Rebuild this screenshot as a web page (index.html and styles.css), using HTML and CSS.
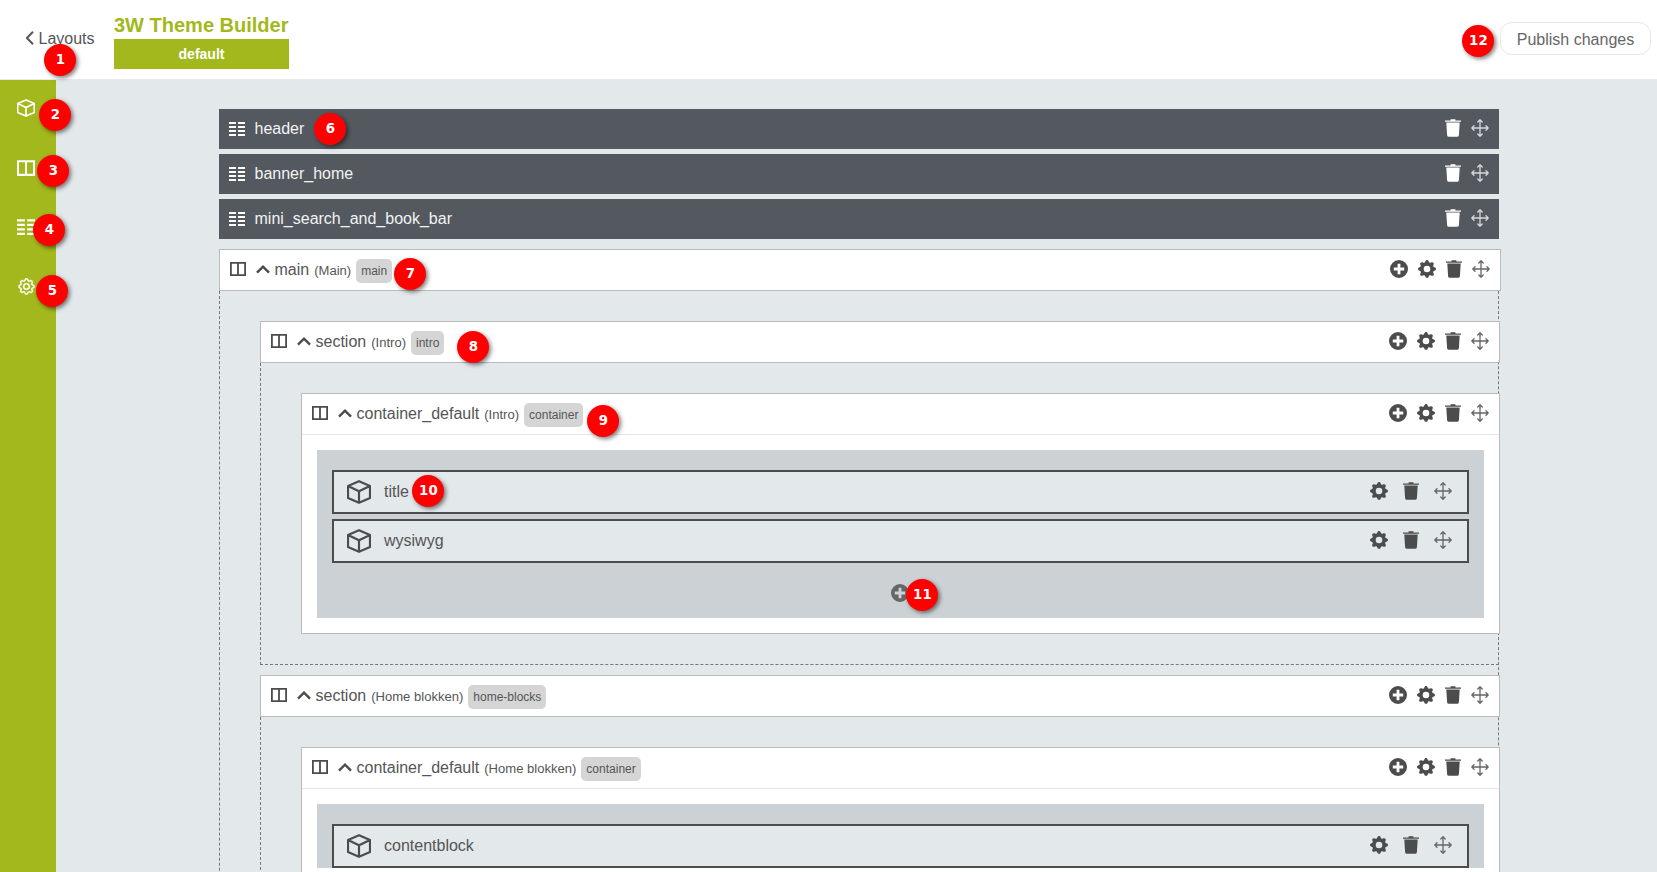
FILE: index.html
```html
<!DOCTYPE html>
<html lang="en">
<head>
<meta charset="utf-8">
<title>3W Theme Builder</title>
<link rel="stylesheet" href="styles.css">
</head>
<body>
<svg class="sprite" xmlns="http://www.w3.org/2000/svg">
  <symbol id="i-box" viewBox="0 0 24 24"><path fill="none" stroke="currentColor" stroke-width="2.2" stroke-linejoin="round" d="M12 1.2 23 5.9v12L12 22.8 1 17.9v-12zM1 5.9l11 5.4 11-5.4M12 11.3v11.5"/></symbol>
  <symbol id="i-split" viewBox="0 0 16 14"><path fill="none" stroke="currentColor" stroke-width="1.8" d="M.9.9h14.2v12.2H.9zM8 .9v12.2"/></symbol>
  <symbol id="i-list" viewBox="0 0 16 14"><path fill="currentColor" d="M0 0h7v2H0zM9 0h7v2H9zM0 4h7v2H0zM9 4h7v2H9zM0 8h7v2H0zM9 8h7v2H9zM0 12h7v2H0zM9 12h7v2H9z"/></symbol>
  <symbol id="i-gear" viewBox="-.3 -.3 16.6 16.6"><path fill="currentColor" stroke="currentColor" stroke-width=".5" d="M8 4.754a3.246 3.246 0 1 0 0 6.492 3.246 3.246 0 0 0 0-6.492zM5.754 8a2.246 2.246 0 1 1 4.492 0 2.246 2.246 0 0 1-4.492 0z"/><path fill="currentColor" stroke="currentColor" stroke-width=".5" d="M9.796 1.343c-.527-1.79-3.065-1.79-3.592 0l-.094.319a.873.873 0 0 1-1.255.52l-.292-.16c-1.64-.892-3.433.902-2.54 2.541l.159.292a.873.873 0 0 1-.52 1.255l-.319.094c-1.79.527-1.79 3.065 0 3.592l.319.094a.873.873 0 0 1 .52 1.255l-.16.292c-.892 1.64.901 3.434 2.541 2.54l.292-.159a.873.873 0 0 1 1.255.52l.094.319c.527 1.79 3.065 1.79 3.592 0l.094-.319a.873.873 0 0 1 1.255-.52l.292.16c1.64.893 3.434-.902 2.54-2.541l-.159-.292a.873.873 0 0 1 .52-1.255l.319-.094c1.79-.527 1.79-3.065 0-3.592l-.319-.094a.873.873 0 0 1-.52-1.255l.16-.292c.893-1.64-.902-3.433-2.541-2.54l-.292.159a.873.873 0 0 1-1.255-.52l-.094-.319zm-2.633.283c.246-.835 1.428-.835 1.674 0l.094.319a1.873 1.873 0 0 0 2.693 1.115l.291-.16c.764-.415 1.6.42 1.184 1.185l-.159.292a1.873 1.873 0 0 0 1.116 2.692l.318.094c.835.246.835 1.428 0 1.674l-.319.094a1.873 1.873 0 0 0-1.115 2.693l.16.291c.415.764-.42 1.6-1.185 1.184l-.291-.159a1.873 1.873 0 0 0-2.693 1.116l-.094.318c-.246.835-1.428.835-1.674 0l-.094-.319a1.873 1.873 0 0 0-2.692-1.115l-.292.16c-.764.415-1.6-.42-1.184-1.185l.159-.291A1.873 1.873 0 0 0 1.945 8.93l-.319-.094c-.835-.246-.835-1.428 0-1.674l.319-.094A1.873 1.873 0 0 0 3.06 4.377l-.16-.292c-.415-.764.42-1.6 1.185-1.184l.292.159a1.873 1.873 0 0 0 2.692-1.115l.094-.319z"/></symbol>
  <symbol id="i-cog" viewBox="0 0 16 16"><path fill="currentColor" d="M9.405 1.05c-.413-1.4-2.397-1.4-2.81 0l-.1.34a1.464 1.464 0 0 1-2.105.872l-.31-.17c-1.283-.698-2.686.705-1.987 1.987l.169.311c.446.82.023 1.841-.872 2.105l-.34.1c-1.4.413-1.4 2.397 0 2.81l.34.1a1.464 1.464 0 0 1 .872 2.105l-.17.31c-.698 1.283.705 2.686 1.987 1.987l.311-.169a1.464 1.464 0 0 1 2.105.872l.1.34c.413 1.4 2.397 1.4 2.81 0l.1-.34a1.464 1.464 0 0 1 2.105-.872l.31.17c1.283.698 2.686-.705 1.987-1.987l-.169-.311a1.464 1.464 0 0 1 .872-2.105l.34-.1c1.4-.413 1.4-2.397 0-2.81l-.34-.1a1.464 1.464 0 0 1-.872-2.105l.17-.31c.698-1.283-.705-2.686-1.987-1.987l-.311.169a1.464 1.464 0 0 1-2.105-.872l-.1-.34zM8 10.93a2.929 2.929 0 1 1 0-5.86 2.929 2.929 0 0 1 0 5.858z"/></symbol>
  <symbol id="i-plus" viewBox="0 0 18 18"><path fill="currentColor" fill-rule="evenodd" d="M9 0a9 9 0 1 1 0 18A9 9 0 0 1 9 0zM7.6 3.8v3.8H3.8v2.8h3.8v3.8h2.8v-3.8h3.8V7.6h-3.8V3.8z"/></symbol>
  <symbol id="i-trash" viewBox="0 0 16 18"><path fill="currentColor" d="M5.6.3h4.8v1.1H16v1.4H0V1.4h5.6z"/><path fill="currentColor" d="M1.3 3.6h13.4l-.8 12.6a1.8 1.8 0 0 1-1.8 1.6H3.9a1.8 1.8 0 0 1-1.8-1.6z"/></symbol>
  <symbol id="i-move" viewBox="0 0 18 18"><path fill="none" stroke="currentColor" stroke-width="1.3" stroke-linecap="round" stroke-linejoin="round" d="M9 .8v16.4M.8 9h16.4M6.8 3 9 .8 11.2 3M6.8 15 9 17.2 11.2 15M3 6.8.8 9 3 11.2M15 6.8 17.2 9 15 11.2"/></symbol>
  <symbol id="i-chev" viewBox="0 0 14 9"><path fill="none" stroke="currentColor" stroke-width="2.4" d="M1 7.6 7 1.7l6 5.9"/></symbol>
  <symbol id="i-back" viewBox="0 0 8 14"><path fill="none" stroke="currentColor" stroke-width="2" d="M7 .8.9 7 7 13.2"/></symbol>
</svg>

<header class="topbar">
  <a class="back"><svg class="ic-back"><use href="#i-back"/></svg><span>Layouts</span></a>
  <div class="brand">
    <h1 class="brand-title">3W Theme Builder</h1>
    <div class="brand-tag">default</div>
  </div>
  <button class="publish">Publish changes</button>
</header>

<div class="work">
  <nav class="sidebar">
    <svg class="side-box"><use href="#i-box"/></svg>
    <svg class="side-split"><use href="#i-split"/></svg>
    <svg class="side-list"><use href="#i-list"/></svg>
    <svg class="side-gear"><use href="#i-gear"/></svg>
  </nav>

  <main class="canvas">
    <div class="bar">
      <svg class="ic-list"><use href="#i-list"/></svg><span class="bar-name">header</span>
      <div class="actions"><svg class="ic-trash"><use href="#i-trash"/></svg><svg class="ic-move"><use href="#i-move"/></svg></div>
    </div>
    <div class="bar">
      <svg class="ic-list"><use href="#i-list"/></svg><span class="bar-name">banner_home</span>
      <div class="actions"><svg class="ic-trash"><use href="#i-trash"/></svg><svg class="ic-move"><use href="#i-move"/></svg></div>
    </div>
    <div class="bar">
      <svg class="ic-list"><use href="#i-list"/></svg><span class="bar-name">mini_search_and_book_bar</span>
      <div class="actions"><svg class="ic-trash"><use href="#i-trash"/></svg><svg class="ic-move"><use href="#i-move"/></svg></div>
    </div>

    <section class="group group-main">
      <div class="head head-wide">
        <svg class="ic-split"><use href="#i-split"/></svg><svg class="ic-chev"><use href="#i-chev"/></svg>
        <span class="name">main</span><span class="sub">(Main)</span><span class="tag">main</span>
        <div class="actions"><svg class="ic-plus"><use href="#i-plus"/></svg><svg class="ic-cog"><use href="#i-cog"/></svg><svg class="ic-trash"><use href="#i-trash"/></svg><svg class="ic-move"><use href="#i-move"/></svg></div>
      </div>
      <div class="group-body">

        <section class="group group-section">
          <div class="head">
            <svg class="ic-split"><use href="#i-split"/></svg><svg class="ic-chev"><use href="#i-chev"/></svg>
            <span class="name">section</span><span class="sub">(Intro)</span><span class="tag">intro</span>
            <div class="actions"><svg class="ic-plus"><use href="#i-plus"/></svg><svg class="ic-cog"><use href="#i-cog"/></svg><svg class="ic-trash"><use href="#i-trash"/></svg><svg class="ic-move"><use href="#i-move"/></svg></div>
          </div>
          <div class="group-body">
            <div class="container">
              <div class="head head-inner">
                <svg class="ic-split"><use href="#i-split"/></svg><svg class="ic-chev"><use href="#i-chev"/></svg>
                <span class="name">container_default</span><span class="sub">(Intro)</span><span class="tag">container</span>
                <div class="actions"><svg class="ic-plus"><use href="#i-plus"/></svg><svg class="ic-cog"><use href="#i-cog"/></svg><svg class="ic-trash"><use href="#i-trash"/></svg><svg class="ic-move"><use href="#i-move"/></svg></div>
              </div>
              <div class="zone">
                <div class="element">
                  <svg class="ic-box"><use href="#i-box"/></svg><span class="el-name">title</span>
                  <div class="actions actions-el"><svg class="ic-cog"><use href="#i-cog"/></svg><svg class="ic-trash"><use href="#i-trash"/></svg><svg class="ic-move"><use href="#i-move"/></svg></div>
                </div>
                <div class="element">
                  <svg class="ic-box"><use href="#i-box"/></svg><span class="el-name">wysiwyg</span>
                  <div class="actions actions-el"><svg class="ic-cog"><use href="#i-cog"/></svg><svg class="ic-trash"><use href="#i-trash"/></svg><svg class="ic-move"><use href="#i-move"/></svg></div>
                </div>
                <div class="zone-add"><svg class="ic-plus"><use href="#i-plus"/></svg></div>
              </div>
            </div>
          </div>
        </section>

        <section class="group group-section group-next">
          <div class="head">
            <svg class="ic-split"><use href="#i-split"/></svg><svg class="ic-chev"><use href="#i-chev"/></svg>
            <span class="name">section</span><span class="sub">(Home blokken)</span><span class="tag">home-blocks</span>
            <div class="actions"><svg class="ic-plus"><use href="#i-plus"/></svg><svg class="ic-cog"><use href="#i-cog"/></svg><svg class="ic-trash"><use href="#i-trash"/></svg><svg class="ic-move"><use href="#i-move"/></svg></div>
          </div>
          <div class="group-body">
            <div class="container">
              <div class="head head-inner">
                <svg class="ic-split"><use href="#i-split"/></svg><svg class="ic-chev"><use href="#i-chev"/></svg>
                <span class="name">container_default</span><span class="sub">(Home blokken)</span><span class="tag">container</span>
                <div class="actions"><svg class="ic-plus"><use href="#i-plus"/></svg><svg class="ic-cog"><use href="#i-cog"/></svg><svg class="ic-trash"><use href="#i-trash"/></svg><svg class="ic-move"><use href="#i-move"/></svg></div>
              </div>
              <div class="zone">
                <div class="element">
                  <svg class="ic-box"><use href="#i-box"/></svg><span class="el-name">contentblock</span>
                  <div class="actions actions-el"><svg class="ic-cog"><use href="#i-cog"/></svg><svg class="ic-trash"><use href="#i-trash"/></svg><svg class="ic-move"><use href="#i-move"/></svg></div>
                </div>
              </div>
            </div>
          </div>
        </section>

      </div>
    </section>
  </main>
</div>

<span class="pin pin-1">1</span>
<span class="pin pin-2">2</span>
<span class="pin pin-3">3</span>
<span class="pin pin-4">4</span>
<span class="pin pin-5">5</span>
<span class="pin pin-6">6</span>
<span class="pin pin-7">7</span>
<span class="pin pin-8">8</span>
<span class="pin pin-9">9</span>
<span class="pin pin-10">10</span>
<span class="pin pin-11">11</span>
<span class="pin pin-12">12</span>
</body>
</html>
```

FILE: styles.css
```css
* { box-sizing: border-box; }

html, body { height: 872px; overflow: hidden; }

body {
  margin: 0;
  position: relative;
  background: #e3e8eb;
  color: #555;
  font-family: "Liberation Sans", Arial, sans-serif;
  font-size: 16px;
}

svg { display: block; flex: none; }
.sprite { position: absolute; width: 0; height: 0; overflow: hidden; }

/* top bar */
.topbar {
  display: flex;
  align-items: flex-start;
  height: 80px;
  background: #fff;
  border-bottom: 1px solid #e6e9eb;
}
.back {
  display: flex;
  align-items: center;
  gap: 4.5px;
  margin: 30px 0 0 26px;
  height: 18px;
  width: 88px;
  color: #555;
}
.ic-back { width: 8px; height: 14px; margin-bottom: 2px; }
.brand { width: 175px; padding-top: 13px; }
.brand-title {
  margin: 0;
  height: 26px;
  line-height: 24px;
  font-size: 20px;
  font-weight: 700;
  color: #a2b81c;
  white-space: nowrap;
}
.brand-tag {
  height: 30px;
  padding-top: 1px;
  line-height: 29px;
  text-align: center;
  font-size: 14px;
  font-weight: 700;
  color: #fff;
  background: #a2b81c;
}
.publish {
  margin: 22px 6px 0 auto;
  width: 151px;
  height: 33px;
  padding: 2px 0 0;
  background: #fff;
  border: 1px solid #e8e8e8;
  border-radius: 12px;
  color: #666;
  font: 16px "Liberation Sans", Arial, sans-serif;
}

/* layout */
.work { display: flex; height: 792px; }
.sidebar {
  display: flex;
  flex-direction: column;
  gap: 43px;
  width: 56px;
  flex: none;
  padding: 19px 0 0 17px;
  background: #a2b81c;
  color: #fff;
}
.side-box { width: 18px; height: 18px; }
.side-split { width: 18px; height: 16px; }
.side-list { width: 18px; height: 16px; }
.side-gear { width: 17px; height: 17px; margin-left: 1px; }

.canvas {
  flex: none;
  width: 1443px;
  padding: 29px 0 0 163px;
}

/* dark bars */
.bar {
  display: flex;
  align-items: center;
  height: 40px;
  margin-bottom: 5px;
  padding: 0 10px;
  background: #53595f;
  color: #f1f3f4;
}
.bar-name { margin-left: 9.5px; }
.ic-list { width: 16px; height: 14px; color: #fff; }
.actions { display: flex; align-items: center; gap: 10px; margin-left: auto; margin-bottom: 2px; }
.bar .ic-trash { color: #fff; }
.bar .ic-move { color: #d5d8da; }

/* icons */
.ic-plus { width: 18px; height: 18px; color: #4c4c4c; }
.ic-cog { width: 18px; height: 18px; color: #4c4c4c; }
.ic-trash { width: 16px; height: 18px; color: #4c4c4c; }
.ic-move { width: 18px; height: 18px; color: #666; }
.ic-split { width: 16px; height: 14px; color: #4c4c4c; margin-bottom: 2px; }
.ic-chev { width: 14px; height: 9px; margin: 0 4.5px 1px 10px; color: #4c4c4c; }
.ic-box { width: 24px; height: 24px; color: #4c4c4c; }

/* nested groups */
.group-main { margin-top: 10px; }
.head {
  display: flex;
  align-items: center;
  height: 42px;
  margin-right: -1px;
  padding: 0 10px;
  background: #fff;
  border: 1px solid #bbb;
  white-space: nowrap;
}
.head-wide { margin-right: -2px; }
.head-inner { margin-right: 0; border: 0; border-bottom: 1px solid #e6e6e6; padding: 0 10px; height: 41px; }
.name { font-size: 16px; }
.sub { margin-left: 5px; font-size: 13.05px; }
.tag {
  margin-left: 5px;
  height: 24px;
  line-height: 24px;
  padding: 0 5px;
  font-size: 12px;
  background: #d5d5d5;
  border-radius: 5px;
  position: relative;
  top: 1px;
}
.group-body {
  padding: 30px 0 30px 40px;
  border: 1px dashed #777;
  border-top: 0;
}
.group-section { margin-right: -1px; }
.group-section > .group-body { border-right: 0; }
.group-next { margin-top: 10px; }

.container {
  margin-right: -1px;
  background: #fff;
  border: 1px solid #bbb;
  padding-bottom: 15px;
}
.zone {
  margin: 15px 15px 0;
  padding: 20px 15px 0;
  background: #ccd1d5;
}
.element {
  display: flex;
  align-items: center;
  height: 44px;
  margin-bottom: 5px;
  padding: 0 15px 0 13px;
  background: #e3e8eb;
  border: 2px solid #4c4c4c;
}
.el-name { margin-left: 13px; }
.actions-el { gap: 15px; }
.zone-add {
  display: flex;
  justify-content: center;
  height: 50px;
  padding-top: 16px;
}
.zone-add .ic-plus { color: #666; margin-right: 2px; }

/* numbered pins */
.pin {
  position: absolute;
  width: 32px;
  height: 32px;
  margin: .7px 0 0 .4px;
  text-align: center;
  border-radius: 50%;
  background: #f00;
  color: #fff;
  font: 700 13.33px/32px "DejaVu Sans", sans-serif;
  box-shadow: 2px 2px 4px rgba(0, 0, 0, .5);
}
.pin-1 { left: 44px; top: 43px; }
.pin-2 { left: 39px; top: 98px; }
.pin-3 { left: 37px; top: 154px; }
.pin-4 { left: 33px; top: 213px; }
.pin-5 { left: 36px; top: 274px; }
.pin-6 { left: 314px; top: 112px; }
.pin-7 { left: 394px; top: 257px; }
.pin-8 { left: 457px; top: 330px; }
.pin-9 { left: 587px; top: 404px; }
.pin-10 { left: 412px; top: 474px; }
.pin-11 { left: 906px; top: 578px; }
.pin-12 { left: 1462px; top: 24px; }
```
